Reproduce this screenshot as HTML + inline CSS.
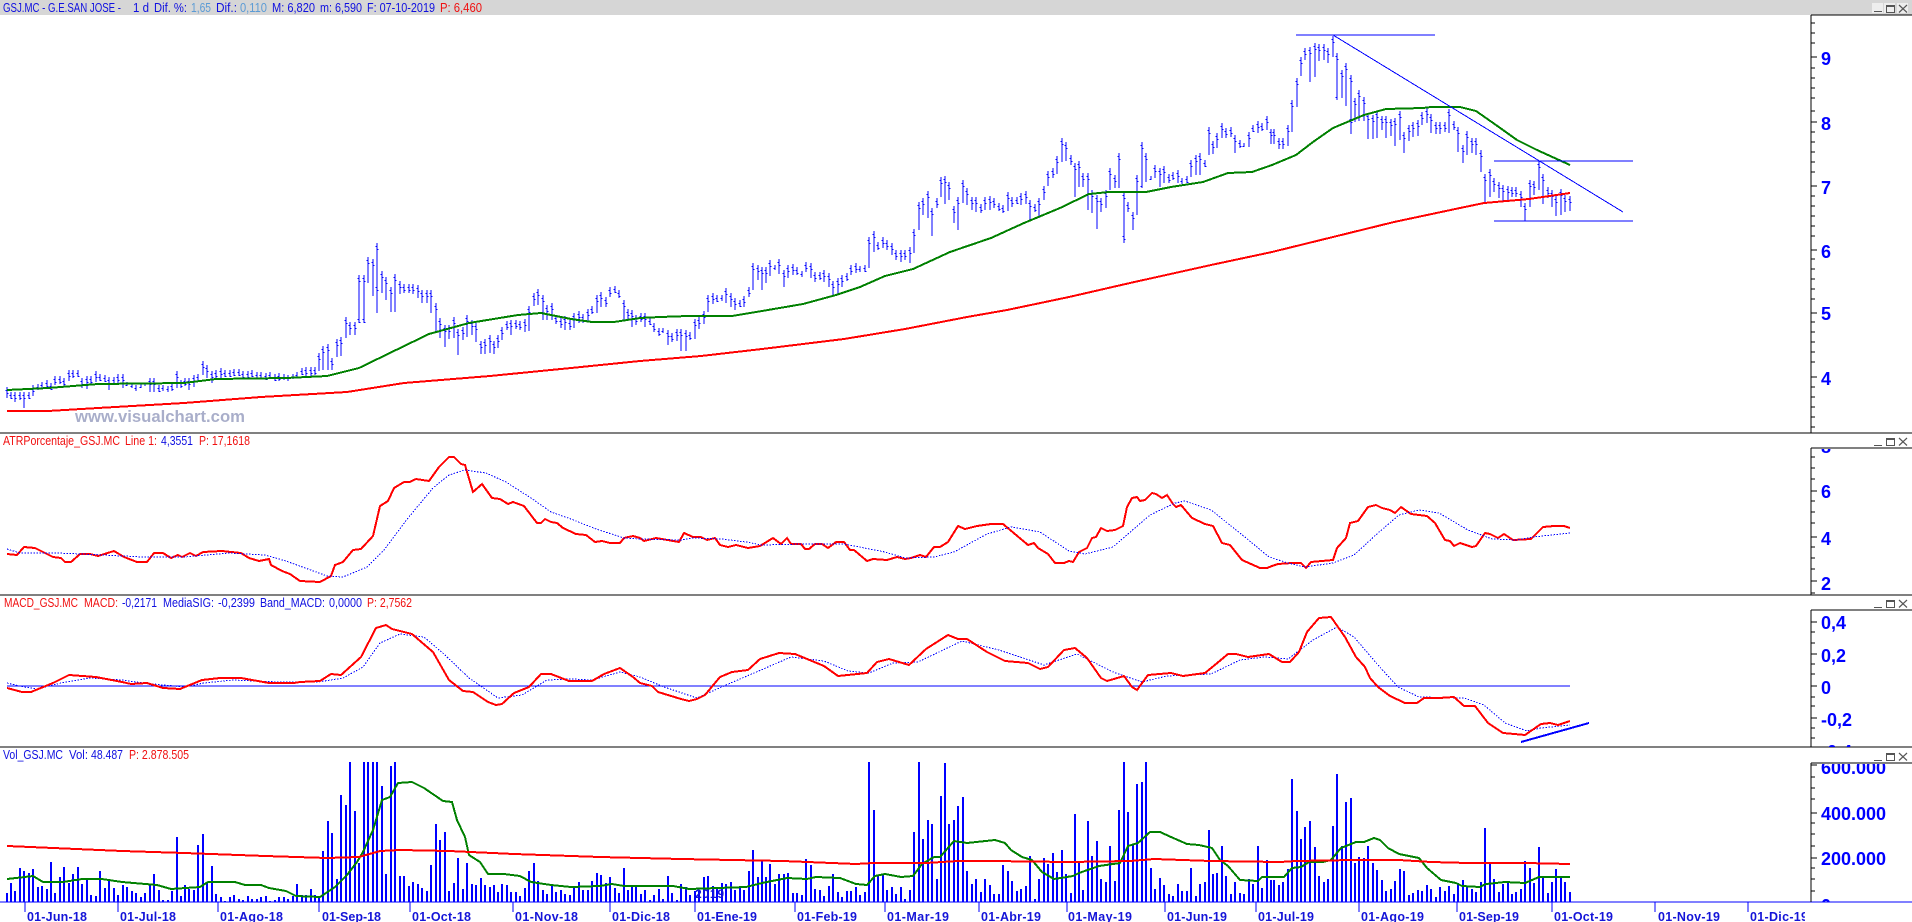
<!DOCTYPE html>
<html><head><meta charset="utf-8"><title>GSJ.MC</title>
<style>
html,body{margin:0;padding:0;background:#fff;overflow:hidden}
svg{display:block;font-family:"Liberation Sans",Arial,sans-serif}
.t{font-size:12.5px}
.b{fill:#1010e0}.r{fill:#f01010}.l{fill:#5b9bd5}
.ax{font-size:18px;font-weight:bold;fill:#0000ff}
.dt{font-size:12.5px;font-weight:bold;fill:#1414d8}
.m{fill:none;shape-rendering:crispEdges}
</style></head><body>
<svg width="1912" height="922" viewBox="0 0 1912 922" xmlns="http://www.w3.org/2000/svg">
<defs>
<clipPath id="c1"><rect x="1812" y="16" width="100" height="417"/></clipPath>
<clipPath id="c2"><rect x="1812" y="449" width="100" height="146"/></clipPath>
<clipPath id="c3"><rect x="1812" y="611" width="100" height="136"/></clipPath>
<clipPath id="c4"><rect x="1812" y="764" width="100" height="138"/></clipPath>
<clipPath id="cv"><rect x="0" y="762" width="1811" height="141"/></clipPath>
<clipPath id="cd"><rect x="0" y="903" width="1805" height="19"/></clipPath>
<path id="pb" d="M7 387V398M11 392V399M15 392V402M20 392V400M24 392V408M29 392V399M33 385V396M38 384V390M42 382V388M47 380V388
M51 383V390M55 376V385M60 376V384M64 378V387M69 370V381M73 370V378M78 370V377M82 378V388M87 376V389M91 376V385
M96 371V382M100 374V381M105 375V382M109 377V390M114 377V385M118 374V384M123 374V388M127 382V386M132 383V388M136 385V391
M141 384V388M145 383V386M150 378V392M154 378V392M159 385V392M163 385V391M168 386V392M172 383V391M177 371V388M181 380V388
M185 378V386M189 378V390M194 375V387M198 374V382M203 361V375M207 365V378M212 371V383M216 370V380M221 368V378M225 370V377
M230 370V377M234 369V376M239 369V376M243 371V378M248 371V378M252 370V377M257 372V378M261 372V379M266 373V380M270 372V379
M275 374V381M279 373V381M284 374V380M288 375V381M293 374V379M297 372V378M302 368V375M306 367V376M311 367V376M315 367V375
M319 353V371M323 346V370M328 344V370M332 358V370M337 339V357M341 337V356M346 317V338M350 322V335M355 322V335M359 275V323
M364 275V323M368 257V283M373 259V296M377 243V313M382 271V293M386 277V300M391 287V312M395 274V312M400 281V294M404 284V293
M409 284V293M413 284V294M418 285V298M422 290V303M427 290V303M431 290V313M436 303V333M440 318V338M445 325V347M449 325V339
M454 317V338M458 329V355M463 327V340M467 315V337M472 320V335M476 323V342M481 341V354M485 339V354M490 335V353M494 341V354
M498 335V348M502 327V340M507 321V330M511 320V335M516 320V329M520 321V330M525 319V332M529 306V331M534 293V306M538 289V305
M543 295V320M547 305V320M552 303V320M556 315V324M561 318V328M565 316V330M570 320V330M574 313V328M579 311V323M583 314V323
M588 309V322M592 306V314M597 295V313M601 292V307M606 297V307M610 287V297M615 286V293M619 290V298M624 300V320M628 309V319
M632 310V327M636 315V325M641 313V322M645 313V327M650 318V325M654 323V332M659 328V336M663 328V333M668 330V345M672 333V342
M677 329V341M681 329V351M686 330V351M690 332V340M695 319V339M699 317V329M704 311V324M708 295V312M713 293V304M717 295V302
M722 295V301M726 288V303M731 293V307M735 298V310M740 300V307M744 296V307M749 287V297M753 263V290M758 265V280M762 267V290
M766 267V283M770 260V276M775 265V270M779 259V274M784 270V287M788 265V278M793 264V275M797 267V275M802 271V277M806 262V272
M811 263V278M815 272V282M820 272V280M824 270V282M829 273V287M833 281V295M838 278V295M842 275V287M847 273V281M851 265V275
M856 263V273M860 266V272M865 265V272M869 237V268M874 231V252M878 242V250M883 237V248M887 240V250M892 243V255M896 250V260
M901 250V262M905 250V260M910 247V263M914 229V253M919 202V230M923 198V215M928 191V218M932 208V236M937 198V208M941 177V197
M945 176V204M949 182V200M954 206V223M958 197V230M963 180V203M967 188V205M972 197V210M976 197V212M981 204V213M985 197V210
M990 196V210M994 198V208M999 203V211M1003 205V213M1008 192V211M1012 197V207M1017 197V204M1021 193V205M1026 191V204M1030 200V220
M1035 204V212M1039 198V218M1044 186V200M1048 171V186M1053 168V178M1057 156V174M1062 138V162M1066 142V161M1071 155V165M1075 163V197
M1079 161V187M1083 173V187M1088 173V210M1092 190V213M1097 195V229M1101 198V212M1106 190V208M1110 168V190M1115 175V188M1119 153V188
M1124 192V243M1128 202V212M1133 212V230M1137 175V215M1142 142V188M1146 153V182M1151 176V180M1155 165V178M1160 168V187M1164 166V183
M1169 174V183M1173 172V180M1178 170V183M1182 178V184M1187 176V183M1191 160V177M1196 155V175M1200 153V175M1205 160V167M1209 127V155
M1213 141V154M1217 133V148M1222 123V138M1226 128V138M1231 127V137M1235 135V153M1240 140V148M1244 143V147M1249 132V147M1253 125V132
M1258 121V133M1262 123V131M1267 116V130M1271 129V144
M1274 129V144M1279 138V149M1283 138V149M1288 125V146M1292 100V132M1297 78V107M1301 57V76M1305 48V60M1310 47V82M1315 43V77
M1319 44V61M1324 44V60M1328 48V63M1333 36V57M1337 53V100M1342 70V98M1346 63V106M1351 75V134M1355 98V122M1359 90V121
M1364 97V121M1368 113V139M1373 115V139M1377 111V138M1382 116V130M1386 116V138M1391 119V136M1395 118V146M1400 111V140M1404 132V153
M1409 125V141M1413 122V137M1418 120V136M1422 112V125M1427 108V123M1431 114V133M1436 122V134M1440 122V134M1445 122V132M1449 109V133
M1454 121V130M1458 127V152M1463 145V163M1467 131V155M1472 138V153M1476 138V155M1481 150V172M1485 174V204M1490 169V197M1494 178V192
M1499 182V198M1503 185V202M1508 186V200M1512 187V197M1516 187V197M1521 191V207M1525 203V221M1530 180V207M1534 181V195M1539 161V190
M1543 174V204M1548 187V198M1552 190V207M1556 196V216M1561 189V215M1565 195V212M1570 196V211"/>
</defs>
<rect width="1912" height="922" fill="#fff"/>
<rect width="1912" height="15" fill="#d6d6d6"/>

<!-- title bar -->
<g class="t">
<text x="3" y="12" class="b" textLength="118" lengthAdjust="spacingAndGlyphs">GSJ.MC - G.E.SAN JOSE -</text>
<text x="133" y="12" class="b" textLength="16" lengthAdjust="spacingAndGlyphs">1 d</text>
<text x="154" y="12" class="b" textLength="33" lengthAdjust="spacingAndGlyphs">Dif. %:</text>
<text x="191" y="12" class="l" textLength="20" lengthAdjust="spacingAndGlyphs">1,65</text>
<text x="216" y="12" class="b" textLength="21" lengthAdjust="spacingAndGlyphs">Dif.:</text>
<text x="240" y="12" class="l" textLength="27" lengthAdjust="spacingAndGlyphs">0,110</text>
<text x="272" y="12" class="b" textLength="43" lengthAdjust="spacingAndGlyphs">M: 6,820</text>
<text x="320" y="12" class="b" textLength="42" lengthAdjust="spacingAndGlyphs">m: 6,590</text>
<text x="367" y="12" class="b" textLength="68" lengthAdjust="spacingAndGlyphs">F: 07-10-2019</text>
<text x="440" y="12" class="r" textLength="42" lengthAdjust="spacingAndGlyphs">P: 6,460</text>

<text x="3" y="445" class="r" textLength="117" lengthAdjust="spacingAndGlyphs">ATRPorcentaje_GSJ.MC</text>
<text x="125" y="445" class="r" textLength="32" lengthAdjust="spacingAndGlyphs">Line 1:</text>
<text x="161" y="445" class="b" textLength="32" lengthAdjust="spacingAndGlyphs">4,3551</text>
<text x="199" y="445" class="r" textLength="51" lengthAdjust="spacingAndGlyphs">P: 17,1618</text>

<text x="4" y="607" class="r" textLength="74" lengthAdjust="spacingAndGlyphs">MACD_GSJ.MC</text>
<text x="84" y="607" class="r" textLength="34" lengthAdjust="spacingAndGlyphs">MACD:</text>
<text x="122" y="607" class="b" textLength="35" lengthAdjust="spacingAndGlyphs">-0,2171</text>
<text x="163" y="607" class="b" textLength="51" lengthAdjust="spacingAndGlyphs">MediaSIG:</text>
<text x="218" y="607" class="b" textLength="37" lengthAdjust="spacingAndGlyphs">-0,2399</text>
<text x="260" y="607" class="b" textLength="65" lengthAdjust="spacingAndGlyphs">Band_MACD:</text>
<text x="329" y="607" class="b" textLength="33" lengthAdjust="spacingAndGlyphs">0,0000</text>
<text x="367" y="607" class="r" textLength="45" lengthAdjust="spacingAndGlyphs">P: 2,7562</text>

<text x="3" y="759" class="b" textLength="60" lengthAdjust="spacingAndGlyphs">Vol_GSJ.MC</text>
<text x="69" y="759" class="b" textLength="19" lengthAdjust="spacingAndGlyphs">Vol:</text>
<text x="91" y="759" class="b" textLength="32" lengthAdjust="spacingAndGlyphs">48.487</text>
<text x="129" y="759" class="r" textLength="60" lengthAdjust="spacingAndGlyphs">P: 2.878.505</text>
</g>

<!-- watermark -->
<text x="75" y="422" font-size="16.5" font-weight="bold" fill="#a9aeca" textLength="170" lengthAdjust="spacingAndGlyphs">www.visualchart.com</text>

<!-- price bars with open/close ticks -->
<g class="m" stroke="#0000ff" stroke-width="1">
<use href="#pb"/>
<use href="#pb" x="1" stroke-dasharray="1 40" stroke-dashoffset="-6"/>
<use href="#pb" x="-1" stroke-dasharray="1 40" stroke-dashoffset="-3"/>
</g>

<!-- main MAs -->
<path class="m" stroke="#008000" stroke-width="2" d="M7 390L48 388L98 384L184 383L216 379L286 378L327 376L359 368L396 350L429 334L469 323L518 315L541 313L571 319L592 322L614 322L640 318L660 317L688 316L732 316L762 311L803 304L836 295L860 287L885 276L913 269L950 252L991 238L1024 223L1060 208L1089 194L1109 192L1146 192L1171 187L1203 182L1228 173L1252 172L1272 165L1296 155L1313 142L1333 128L1364 115L1386 109L1423 108L1431 107L1460 107L1476 111L1496 125L1517 140L1537 150L1570 165"/>
<path class="m" stroke="#ff0000" stroke-width="2" d="M7 411L48 411L98 408L184 403L261 397L347 392L404 383L490 376L571 368L640 361L701 356L762 349L844 339L905 329L967 317L1007 310L1069 297L1130 283L1211 265L1272 252L1333 237L1394 222L1460 208L1484 203L1529 199L1570 193"/>
<path class="m" stroke="#0000ff" stroke-width="1" d="M1296 35H1435M1494 161H1633M1494 221H1633M1333 35L1623 212"/>

<!-- ATR -->
<path class="m" stroke="#ff0000" stroke-width="2" d="M7 554L17 555L24 547L35 548L53 557L61 558L65 562L71 562L80 554L90 554L98 556L114 551L124 557L137 562L147 562L154 553L163 553L171 558L178 555L182 557L190 553L196 556L203 552L222 551L241 553L249 558L259 561L269 559L271 565L282 571L290 574L300 581L320 582L331 576L335 565L343 562L353 550L361 549L373 536L380 506L388 501L394 488L404 482L410 482L416 479L429 481L439 467L449 457L454 457L461 464L465 465L473 492L482 484L492 498L500 499L508 504L513 502L524 506L537 523L541 523L545 519L551 522L557 523L563 528L576 534L586 535L595 542L602 541L610 543L620 543L624 538L633 536L640 538L644 541L656 538L679 542L684 533L693 537L701 537L707 540L715 538L720 545L728 547L736 545L748 548L760 546L773 538L781 544L787 538L791 544L801 544L805 549L809 549L815 544L822 544L828 548L836 542L844 542L850 550L854 550L867 561L873 559L887 560L897 557L905 559L911 558L920 555L926 557L934 547L940 547L948 542L958 526L965 529L977 526L991 524L1003 524L1028 545L1034 543L1038 548L1048 554L1055 563L1064 563L1069 561L1073 562L1079 552L1087 548L1092 538L1096 537L1101 528L1107 531L1115 530L1123 526L1127 507L1132 498L1137 497L1140 501L1145 500L1152 493L1156 494L1162 498L1167 495L1173 504L1176 507L1181 505L1192 518L1205 524L1213 526L1222 543L1230 545L1242 560L1260 568L1267 568L1272 566L1278 564L1292 563L1301 563L1306 568L1311 562L1333 560L1337 548L1346 538L1350 523L1358 521L1368 507L1376 505L1382 508L1390 510L1395 513L1401 507L1411 514L1427 516L1435 523L1445 540L1450 541L1454 546L1460 543L1472 547L1476 546L1485 533L1490 534L1498 538L1504 534L1513 540L1531 539L1543 527L1554 526L1564 526L1570 528"/>
<path class="m" stroke="#0000ff" stroke-width="1" stroke-dasharray="1.5 1.5" d="M7 549L20 553L57 553L82 554L143 557L184 557L229 553L265 555L286 561L327 576L343 577L367 567L384 550L408 518L433 488L449 475L465 470L486 473L506 482L531 498L551 512L571 519L596 529L624 538L640 539L681 540L693 538L722 539L746 542L762 545L803 544L844 544L885 552L905 558L934 557L954 552L987 534L1011 527L1040 532L1069 551L1085 554L1113 547L1150 515L1175 503L1185 501L1211 510L1240 533L1269 557L1288 563L1305 567L1333 563L1354 555L1378 533L1399 515L1419 510L1439 513L1468 530L1492 539L1517 540L1533 537L1570 533"/>

<!-- MACD -->
<path class="m" stroke="#0000ff" stroke-width="1" d="M7 686H1570"/>
<path class="m" stroke="#0000ff" stroke-width="1" stroke-dasharray="1.5 1.5" d="M7 683L24 687L37 689L61 683L90 678L122 680L143 683L184 687L204 683L233 680L278 682L318 682L343 678L363 667L380 643L400 634L424 637L445 655L469 678L498 698L522 695L547 680L571 679L592 680L620 672L640 677L664 687L697 698L726 685L754 673L791 657L824 661L848 671L869 673L893 663L918 662L962 641L999 650L1044 665L1077 654L1113 672L1142 682L1167 676L1211 674L1240 660L1264 657L1288 659L1313 640L1337 627L1354 637L1378 665L1398 687L1419 697L1464 698L1484 705L1505 723L1527 731L1541 728L1570 725"/>
<path class="m" stroke="#ff0000" stroke-width="2" d="M7 688L22 692L31 692L53 683L69 675L96 677L122 682L131 684L147 683L163 688L180 689L202 680L220 678L241 678L269 683L294 683L300 682L320 681L331 674L341 675L361 657L376 628L386 625L392 629L412 634L433 652L449 680L463 691L473 692L488 702L496 705L502 704L514 693L529 687L541 674L551 674L569 681L592 681L604 674L620 668L633 677L640 683L652 686L658 692L681 699L689 701L697 699L705 695L720 677L732 672L748 670L760 659L779 653L795 654L824 666L838 676L867 673L877 662L889 659L909 665L926 649L948 635L958 639L967 639L987 652L1005 661L1028 663L1040 669L1048 667L1064 650L1075 648L1087 658L1101 678L1107 681L1124 676L1132 687L1137 690L1148 675L1171 673L1183 676L1205 673L1216 664L1228 654L1236 654L1248 657L1269 654L1282 662L1290 662L1299 652L1307 632L1319 618L1331 617L1345 637L1356 657L1365 667L1370 678L1378 687L1390 696L1405 703L1417 703L1424 698L1439 698L1454 697L1464 706L1475 706L1488 723L1503 733L1525 735L1541 724L1550 723L1558 725L1570 721"/>
<path class="m" stroke="#0000ff" stroke-width="2" d="M1521 742L1589 723"/>

<!-- volume -->
<g clip-path="url(#cv)">
<path class="m" stroke="#0000ff" stroke-width="2" d="M7 902v-9M11 902v-19M15 902v-11M20 902v-34M24 902v-31M29 902v-29M33 902v-33M38 902v-15M42 902v-16M47 902v-13
M51 902v-40M55 902v-9M60 902v-25M64 902v-35M69 902v-19M73 902v-28M78 902v-35M82 902v-18M87 902v-22M91 902v-7
M96 902v-6M100 902v-31M105 902v-14M109 902v-22M114 902v-14M118 902v-7M123 902v-17M127 902v-15M132 902v-11M136 902v-9
M141 902v-5M145 902v-9M150 902v-17M154 902v-28M159 902v-12M163 902v-2M168 902v-2M172 902v-11M177 902v-65M181 902v-6
M185 902v-17M189 902v-13M194 902v-12M198 902v-57M203 902v-68M207 902v-19M212 902v-36M216 902v-8M221 902v-5M225 902v-1
M230 902v-5M234 902v-7M239 902v-3M243 902v-2M248 902v-6M252 902v-3M257 902v-3M261 902v-5M266 902v-6M270 902v-1
M275 902v-2M279 902v-5M284 902v-5M288 902v-3M293 902v-6M297 902v-18M302 902v-7M306 902v-7M311 902v-13M315 902v-7
M319 902v-6M323 902v-51M328 902v-81M332 902v-69M337 902v-23M341 902v-107M346 902v-97M350 902v-145M355 902v-91M359 902v-39
M364 902v-145M368 902v-145M373 902v-145M377 902v-145M382 902v-116M386 902v-28M391 902v-136M395 902v-145M400 902v-26M404 902v-26
M409 902v-16M413 902v-20M418 902v-18M422 902v-14M427 902v-11M431 902v-37M436 902v-78M440 902v-62M445 902v-70M449 902v-11
M454 902v-19M458 902v-44M463 902v-13M467 902v-39M472 902v-18M476 902v-17M481 902v-24M485 902v-17M490 902v-15M494 902v-17
M498 902v-10M502 902v-18M507 902v-17M511 902v-10M516 902v-10M520 902v-6M525 902v-14M529 902v-31M534 902v-39M538 902v-21
M543 902v-12M547 902v-8M552 902v-17M556 902v-10M561 902v-12M565 902v-8M570 902v-7M574 902v-15M579 902v-20M583 902v-12
M588 902v-12M592 902v-21M597 902v-29M601 902v-27M606 902v-19M610 902v-25M615 902v-14M619 902v-9M624 902v-34M628 902v-12
M632 902v-17M636 902v-16M641 902v-8M645 902v-12M650 902v-2M654 902v-7M659 902v-13M663 902v-3M668 902v-26M672 902v-9
M677 902v-2M681 902v-18M686 902v-15M690 902v-7M695 902v-11M699 902v-11M704 902v-25M708 902v-26M713 902v-16M717 902v-13
M722 902v-19M726 902v-18M731 902v-20M735 902v-12M740 902v-16M744 902v-12M749 902v-31M753 902v-52M758 902v-25M762 902v-41
M766 902v-25M770 902v-38M775 902v-18M779 902v-28M784 902v-28M788 902v-29M793 902v-9M797 902v-9M802 902v-7M806 902v-43
M811 902v-37M815 902v-13M820 902v-12M824 902v-6M829 902v-16M833 902v-28M838 902v-10M842 902v-5M847 902v-11M851 902v-11
M856 902v-15M860 902v-7M865 902v-10M869 902v-145M874 902v-92M878 902v-27M883 902v-27M887 902v-12M892 902v-15M896 902v-8
M901 902v-15M905 902v-3M910 902v-12M914 902v-70M919 902v-145M923 902v-63M928 902v-82M932 902v-78M937 902v-23M941 902v-106
M945 902v-139M949 902v-78M954 902v-82M958 902v-96M963 902v-105M967 902v-31M972 902v-18M976 902v-23M981 902v-10M985 902v-23
M990 902v-17M994 902v-8M999 902v-8M1003 902v-37M1008 902v-31M1012 902v-21M1017 902v-11M1021 902v-13M1026 902v-16M1030 902v-46
M1035 902v-3M1039 902v-23M1044 902v-44M1048 902v-38M1053 902v-49M1057 902v-30M1062 902v-52M1066 902v-28M1071 902v-9M1075 902v-88
M1079 902v-39M1083 902v-12M1088 902v-81M1092 902v-46M1097 902v-61M1101 902v-23M1106 902v-20M1110 902v-56M1115 902v-21M1119 902v-92
M1124 902v-145M1128 902v-90M1133 902v-57M1137 902v-118M1142 902v-120M1146 902v-145M1151 902v-34M1155 902v-13M1160 902v-24M1164 902v-17
M1169 902v-8M1173 902v-6M1178 902v-18M1182 902v-11M1187 902v-11M1191 902v-34M1196 902v-6M1200 902v-18M1205 902v-20M1209 902v-72
M1213 902v-28M1217 902v-29M1222 902v-56M1226 902v-26M1231 902v-8M1235 902v-20M1240 902v-9M1244 902v-8M1249 902v-23M1253 902v-18
M1258 902v-56M1262 902v-14M1267 902v-42M1271 902v-22
M1274 902v-22M1279 902v-17M1283 902v-20M1288 902v-33M1292 902v-123M1297 902v-91M1301 902v-63M1305 902v-75M1310 902v-81M1315 902v-55
M1319 902v-26M1324 902v-20M1328 902v-23M1333 902v-76M1337 902v-128M1342 902v-56M1346 902v-100M1351 902v-104M1355 902v-39M1359 902v-45
M1364 902v-44M1368 902v-56M1373 902v-39M1377 902v-32M1382 902v-22M1386 902v-11M1391 902v-13M1395 902v-21M1400 902v-33M1404 902v-31
M1409 902v-7M1413 902v-9M1418 902v-12M1422 902v-11M1427 902v-17M1431 902v-13M1436 902v-5M1440 902v-15M1445 902v-11M1449 902v-16
M1454 902v-8M1458 902v-19M1463 902v-22M1467 902v-15M1472 902v-13M1476 902v-10M1481 902v-20M1485 902v-74M1490 902v-39M1494 902v-23
M1499 902v-10M1503 902v-18M1508 902v-21M1512 902v-8M1516 902v-10M1521 902v-13M1525 902v-41M1530 902v-34M1534 902v-19M1539 902v-55
M1543 902v-26M1548 902v-9M1552 902v-20M1556 902v-33M1561 902v-25M1565 902v-20M1570 902v-10"/>
</g>
<text x="695" y="898" font-size="12" font-weight="bold" fill="#1414d8" textLength="29">2019</text>
<path class="m" stroke="#008000" stroke-width="2" d="M7 879L16 878L33 876L43 882L63 882L82 879L102 879L122 882L157 885L171 889L200 887L208 882L235 882L245 885L261 885L269 888L286 891L296 896L320 897L335 887L347 875L357 862L363 852L373 830L382 800L390 797L398 783L412 782L424 788L443 801L452 802L457 820L465 837L469 855L480 862L488 874L504 874L520 876L531 882L551 885L571 887L600 886L612 884L624 886L640 886L673 886L689 889L746 887L762 883L787 878L807 879L816 877L840 878L856 884L867 885L875 876L885 874L901 877L913 876L922 864L934 857L940 857L954 841L967 843L995 840L1005 843L1011 850L1022 857L1032 860L1042 872L1054 879L1073 876L1079 873L1099 866L1120 863L1128 846L1138 843L1150 832L1160 832L1171 837L1187 844L1199 845L1212 848L1220 860L1228 866L1240 880L1258 881L1262 877L1284 877L1292 868L1301 867L1309 862L1323 862L1331 860L1341 848L1356 842L1364 842L1374 838L1380 840L1388 848L1399 854L1419 858L1427 868L1441 880L1456 883L1462 886L1480 887L1486 884L1505 882L1525 883L1539 877L1558 877L1570 877"/>
<path class="m" stroke="#ff0000" stroke-width="2" d="M7 846L53 848L122 851L184 853L265 856L327 858L359 857L380 851L400 850L449 851L514 854L600 857L640 858L681 859L783 861L856 864L873 863L926 863L958 861L991 861L1069 862L1130 861L1154 859L1211 861L1280 862L1296 861L1354 860L1399 860L1431 862L1468 863L1525 863L1570 864"/>

<!-- baseline and date axis -->
<path class="m" stroke="#0000ff" stroke-width="1" d="M0 902H1912M25 902V912M118 902V912M218 902V912M319 902V912M410 902V912M513 902V912M610 902V912M695 902V912M795 902V912M885 902V912M979 902V912M1067 902V912M1165 902V912M1256 902V912M1359 902V912M1457 902V912M1552 902V912M1655 902V912M1748 902V912"/>
<g class="dt" clip-path="url(#cd)">
<text x="27" y="921" textLength="60">01-Jun-18</text>
<text x="120" y="921" textLength="56">01-Jul-18</text>
<text x="220" y="921" textLength="63">01-Ago-18</text>
<text x="322" y="921" textLength="59">01-Sep-18</text>
<text x="412" y="921" textLength="59">01-Oct-18</text>
<text x="515" y="921" textLength="63">01-Nov-18</text>
<text x="612" y="921" textLength="58">01-Dic-18</text>
<text x="697" y="921" textLength="60">01-Ene-19</text>
<text x="797" y="921" textLength="60">01-Feb-19</text>
<text x="887" y="921" textLength="62">01-Mar-19</text>
<text x="981" y="921" textLength="60">01-Abr-19</text>
<text x="1068" y="921" textLength="64">01-May-19</text>
<text x="1167" y="921" textLength="60">01-Jun-19</text>
<text x="1258" y="921" textLength="56">01-Jul-19</text>
<text x="1361" y="921" textLength="63">01-Ago-19</text>
<text x="1459" y="921" textLength="60">01-Sep-19</text>
<text x="1554" y="921" textLength="59">01-Oct-19</text>
<text x="1658" y="921" textLength="62">01-Nov-19</text>
<text x="1750" y="921" textLength="58">01-Dic-19</text>
</g>

<!-- separators and axes -->
<path class="m" stroke="#000" stroke-width="1" d="M0 433H1912M0 595H1912M0 747H1912M1811 15H1912M1811 448H1912M1811 610H1912M1811 763H1912M1811 15V433M1811 448V595M1811 610V747M1811 763V902"/>
<path class="m" stroke="#000" stroke-width="1" d="M1811 23h4M1811 33h4M1811 43h4M1811 68h4M1811 78h4M1811 88h4M1811 98h4M1811 111h4M1811 132h4M1811 142h4M1811 152h4M1811 162h4M1811 172h4M1811 196h4M1811 206h4M1811 216h4M1811 226h4M1811 236h4M1811 259h4M1811 269h4M1811 279h4M1811 289h4M1811 299h4M1811 322h4M1811 332h4M1811 342h4M1811 352h4M1811 362h4M1811 387h4M1811 397h4M1811 407h4M1811 417h4M1811 427h4
M1811 57h6M1811 122h6M1811 186h6M1811 250h6M1811 313h6M1811 377h6
M1811 457h4M1811 468h4M1811 479h4M1811 501h4M1811 512h4M1811 523h4M1811 547h4M1811 558h4M1811 569h4M1811 593h4M1811 491h6M1811 537h6M1811 581h6
M1811 632h4M1811 643h4M1811 664h4M1811 674h4M1811 697h4M1811 706h4M1811 728h4M1811 738h4M1811 622h6M1811 654h6M1811 686h6M1811 718h6
M1811 777h4M1811 788h4M1811 799h4M1811 823h4M1811 834h4M1811 846h4M1811 868h4M1811 879h4M1811 891h4M1811 765h6M1811 813h6M1811 858h6"/>

<g class="ax" clip-path="url(#c1)">
<text x="1821" y="65">9</text><text x="1821" y="130">8</text><text x="1821" y="194">7</text><text x="1821" y="258">6</text><text x="1821" y="320">5</text><text x="1821" y="385">4</text>
</g>
<g class="ax" clip-path="url(#c2)">
<text x="1821" y="453">8</text><text x="1821" y="498">6</text><text x="1821" y="545">4</text><text x="1821" y="590">2</text>
</g>
<g class="ax" clip-path="url(#c3)">
<text x="1821" y="629">0,4</text><text x="1821" y="662">0,2</text><text x="1821" y="694">0</text><text x="1821" y="726">-0,2</text><text x="1821" y="758">-0,4</text>
</g>
<g class="ax" clip-path="url(#c4)">
<text x="1821" y="774">600.000</text><text x="1821" y="820">400.000</text><text x="1821" y="865">200.000</text><text x="1821" y="912">0</text>
</g>

<!-- window buttons -->
<path fill="#eeeeee" d="M1872 3h11v10h-11zM1884 3h11v10h-11zM1897 3h11v10h-11z"/>
<g fill="none" stroke="#555" stroke-width="1" class="m">
<path d="M1874 11.5H1882M1886.5 5.5H1894.5V12.5H1886.5ZM1886.5 6.5H1894.5"/>
<path d="M1874 445.5H1882M1886.5 438.5H1894.5V445.5H1886.5ZM1886.5 439.5H1894.5"/>
<path d="M1874 607.5H1882M1886.5 600.5H1894.5V607.5H1886.5ZM1886.5 601.5H1894.5"/>
<path d="M1874 760.5H1882M1886.5 753.5H1894.5V760.5H1886.5ZM1886.5 754.5H1894.5"/>
</g>
<g fill="none" stroke="#555" stroke-width="1.2">
<path d="M1899 5L1907 12.5M1907 5L1899 12.5"/>
<path d="M1899 438L1907 445.5M1907 438L1899 445.5"/>
<path d="M1899 600L1907 607.5M1907 600L1899 607.5"/>
<path d="M1899 753L1907 760.5M1907 753L1899 760.5"/>
</g>
</svg>
</body></html>
